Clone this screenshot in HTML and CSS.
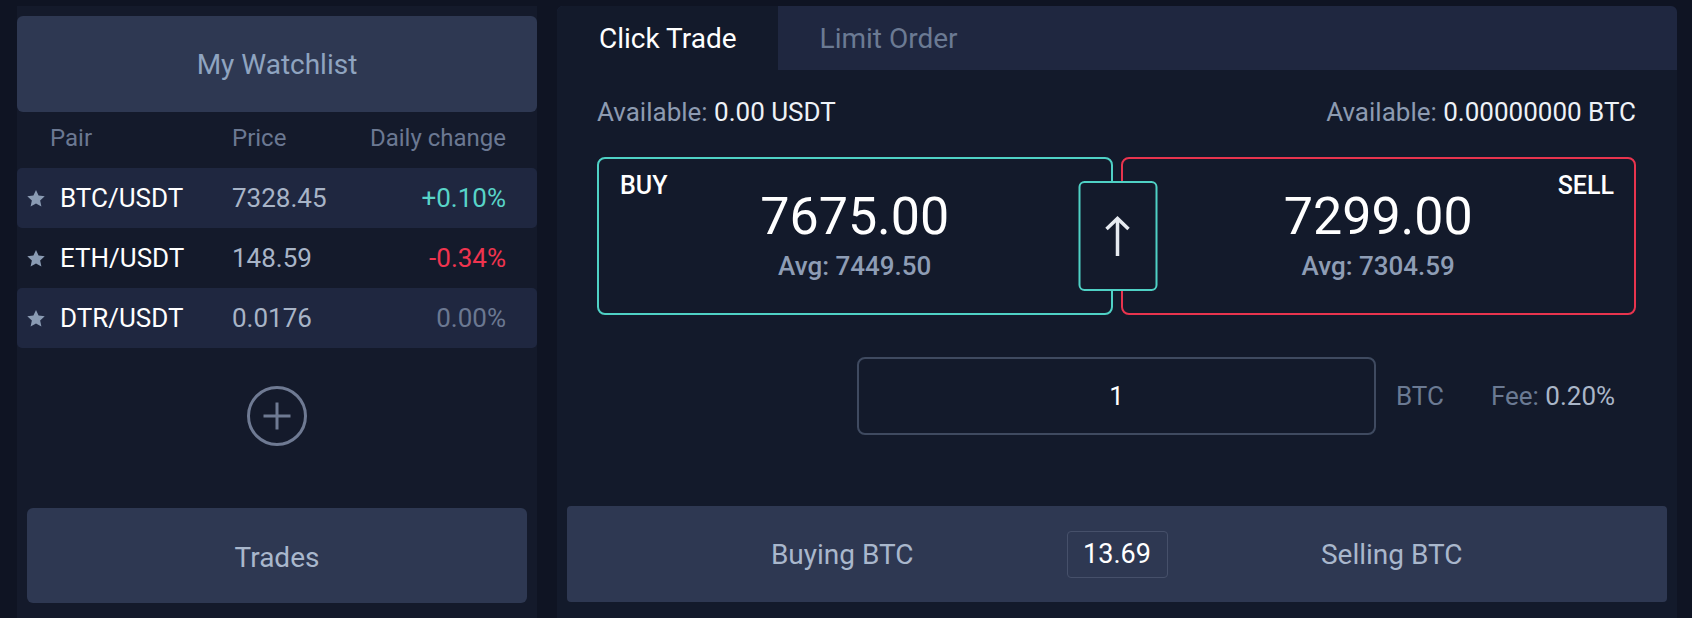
FILE: index.html
```html
<!DOCTYPE html>
<html>

<head>
  <meta charset="utf-8">
  <title>Click Trade</title>
  <link rel="stylesheet" href="styles.css">
</head>

<body>

  <div class="page">

    <!-- Watchlist column -->
    <aside class="watchlist">
      <div class="watchlist-title">My Watchlist</div>

      <div class="pair-head">
        <span class="col-pair">Pair</span>
        <span>Price</span>
        <span class="col-change">Daily change</span>
      </div>

      <div class="pair-row striped">
        <span class="col-pair">
          <svg class="star" viewBox="0 0 24 23" width="18" height="17"><polygon points="12,0 15.5,7.6 23.8,8.5 17.6,14.1 19.3,22.4 12,18.2 4.7,22.4 6.4,14.1 0.2,8.5 8.5,7.6" /></svg>
          BTC/USDT
        </span>
        <span class="price">7328.45</span>
        <span class="col-change up">+0.10%</span>
      </div>

      <div class="pair-row">
        <span class="col-pair">
          <svg class="star" viewBox="0 0 24 23" width="18" height="17"><polygon points="12,0 15.5,7.6 23.8,8.5 17.6,14.1 19.3,22.4 12,18.2 4.7,22.4 6.4,14.1 0.2,8.5 8.5,7.6" /></svg>
          ETH/USDT
        </span>
        <span class="price">148.59</span>
        <span class="col-change down">-0.34%</span>
      </div>

      <div class="pair-row striped">
        <span class="col-pair">
          <svg class="star" viewBox="0 0 24 23" width="18" height="17"><polygon points="12,0 15.5,7.6 23.8,8.5 17.6,14.1 19.3,22.4 12,18.2 4.7,22.4 6.4,14.1 0.2,8.5 8.5,7.6" /></svg>
          DTR/USDT
        </span>
        <span class="price">0.0176</span>
        <span class="col-change flat">0.00%</span>
      </div>

      <div class="add-pair">
        <svg viewBox="0 0 60 60" width="60" height="60">
          <circle cx="30" cy="30" r="28.5" />
          <line x1="16.5" y1="30" x2="43.5" y2="30" />
          <line x1="30" y1="16.5" x2="30" y2="43.5" />
        </svg>
      </div>

      <div class="trades-btn">Trades</div>
    </aside>

    <!-- Trading column -->
    <main class="trade-panel">
      <div class="tabs">
        <div class="tab active">Click Trade</div>
        <div class="tab">Limit Order</div>
      </div>

      <div class="trade-body">
        <div class="balances">
          <span><span class="muted">Available:</span> 0.00 USDT</span>
          <span><span class="muted">Available:</span> 0.00000000 BTC</span>
        </div>

        <div class="quotes">
          <div class="quote buy">
            <span class="quote-label">BUY</span>
            <div class="quote-price">7675.00</div>
            <div class="quote-avg">Avg: 7449.50</div>
          </div>
          <div class="quote sell">
            <span class="quote-label">SELL</span>
            <div class="quote-price">7299.00</div>
            <div class="quote-avg">Avg: 7304.59</div>
          </div>

          <!-- swap button sits over the two quote boxes -->
          <div class="swap">
            <svg viewBox="0 0 26 40" width="26" height="40">
              <line x1="13" y1="3" x2="13" y2="40" />
              <polyline points="2,13 13,2.5 24,13" />
            </svg>
          </div>
        </div>

        <div class="amount-row">
          <div></div>
          <div class="amount-input">1</div>
          <div class="amount-meta">
            <span class="unit">BTC</span>
            <span class="fee"><span class="unit">Fee:</span> 0.20%</span>
          </div>
        </div>
      </div>

      <div class="summary-bar">
        <span class="summary-label">Buying BTC</span>
        <span class="summary-value">13.69</span>
        <span class="summary-label">Selling BTC</span>
      </div>
    </main>

  </div>

</body>

</html>
```

FILE: styles.css
```css
body {
  margin: 0;
  padding: 0;
  font-family: Roboto, 'Liberation Sans', sans-serif;
  background-color: #0f1423;
  color: #ffffff;
  height: 618px;
  overflow: hidden;
}

.page {
  display: flex;
  gap: 20px;
  padding: 6px 15px 0 17px;
}

/* Watchlist column */
.watchlist {
  width: 520px;
  height: 612px;
  padding-top: 10px;
  box-sizing: border-box;
  background-color: #141a2b;
  display: flex;
  flex-direction: column;
}

.watchlist-title {
  height: 96px;
  display: flex;
  align-items: center;
  justify-content: center;
  background-color: #2e3852;
  border-radius: 6px;
  color: #8fa4c0;
  font-size: 28px;
}

.pair-head,
.pair-row {
  display: grid;
  grid-template-columns: 205px 1fr auto;
  align-items: center;
  padding: 0 31px 0 10px;
}

.pair-head {
  height: 56px;
  padding-bottom: 4px;
  box-sizing: border-box;
  font-size: 24px;
  color: #6b7892;
}

.pair-head .col-pair {
  padding-left: 23px;
}

.pair-row {
  height: 60px;
  font-size: 26px;
}

.pair-row.striped {
  background-color: #1f2740;
  border-radius: 5px;
}

.col-pair {
  display: flex;
  align-items: center;
  gap: 15px;
}

.star {
  fill: #8a9bb3;
}

.price {
  color: #a8b4c7;
}

.col-change {
  text-align: right;
}

.up {
  color: #58d4c8;
}

.down {
  color: #f0344f;
}

.flat {
  color: #6b7891;
}

.add-pair {
  margin-top: 38px;
  display: flex;
  justify-content: center;
}

.add-pair svg {
  fill: none;
  stroke: #6f7a93;
  stroke-width: 3;
}

.trades-btn {
  margin: 62px 10px 0;
  height: 95px;
  padding-top: 3px;
  box-sizing: border-box;
  display: flex;
  align-items: center;
  justify-content: center;
  background-color: #2e3852;
  border-radius: 6px;
  color: #a9b7cc;
  font-size: 28px;
}

/* Trading column */
.trade-panel {
  flex: 1;
  height: 612px;
  background-color: #131a2b;
  border-radius: 6px 6px 0 0;
  overflow: hidden;
}

.tabs {
  display: flex;
  height: 64px;
  background-color: #1f2740;
}

.tab {
  display: flex;
  align-items: center;
  padding: 0 41px 0 42px;
  font-size: 28px;
  color: #6b7a93;
}

.tab.active {
  background-color: #131a2b;
  color: #ffffff;
}

.trade-body {
  padding: 0 41px 0 40px;
}

.balances {
  margin-top: 27px;
  height: 30px;
  display: flex;
  justify-content: space-between;
  align-items: center;
  font-size: 26px;
  color: #eef2f7;
}

.muted {
  color: #8d9bb1;
}

.quotes {
  position: relative;
  margin-top: 30px;
  display: flex;
  gap: 8px;
}

.quote {
  position: relative;
  flex: 1;
  height: 158px;
  box-sizing: border-box;
  border: 2px solid;
  border-radius: 8px;
  display: flex;
  flex-direction: column;
  align-items: center;
  justify-content: center;
}

.quote.buy {
  border-color: #4fd1c5;
}

.quote.sell {
  border-color: #e8344e;
}

.quote-label {
  position: absolute;
  top: 15px;
  font-size: 25px;
  line-height: 24px;
  font-weight: 500;
}

.buy .quote-label {
  left: 21px;
}

.sell .quote-label {
  right: 20px;
}

.quote-price {
  font-size: 52px;
  line-height: 52px;
}

.quote-avg {
  margin-top: 8px;
  font-size: 26px;
  line-height: 30px;
  font-weight: 500;
  color: #8e9db5;
}

.swap {
  position: absolute;
  top: 24px;
  left: 50%;
  transform: translateX(-50%);
  margin-left: 1px;
  width: 79px;
  height: 110px;
  box-sizing: border-box;
  background-color: #131a2b;
  border: 2px solid #4fd1c5;
  border-radius: 6px;
  display: flex;
  align-items: center;
  justify-content: center;
}

.swap svg {
  fill: none;
  stroke: #e6eaf0;
  stroke-width: 3.5;
}

.amount-row {
  margin-top: 42px;
  display: grid;
  grid-template-columns: 1fr 519px 1fr;
  align-items: center;
}

.amount-input {
  height: 78px;
  box-sizing: border-box;
  border: 2px solid #3f4a60;
  border-radius: 8px;
  display: flex;
  align-items: center;
  justify-content: center;
  font-size: 26px;
}

.amount-meta {
  display: flex;
  align-items: center;
  gap: 47px;
  padding-left: 20px;
  font-size: 26px;
}

.unit {
  color: #6b7a93;
}

.fee {
  color: #aab6c8;
}

.summary-bar {
  margin: 71px 10px 0;
  height: 96px;
  padding: 0 51px;
  display: flex;
  align-items: center;
  background-color: #2e3852;
  border-radius: 4px;
}

.summary-label {
  flex: 1;
  text-align: center;
  font-size: 28px;
  color: #a9b7cc;
}

.summary-value {
  width: 101px;
  height: 47px;
  box-sizing: border-box;
  border: 1px solid #46506a;
  border-radius: 4px;
  display: flex;
  align-items: center;
  justify-content: center;
  font-size: 27px;
}
```
